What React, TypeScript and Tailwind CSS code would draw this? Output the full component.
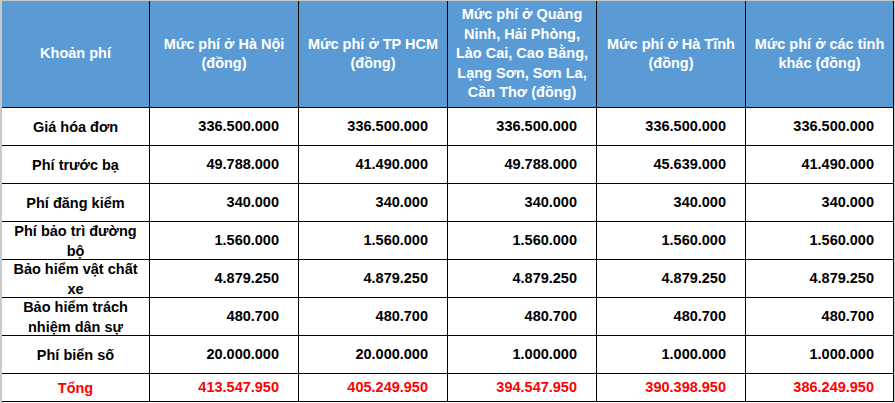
import { Fragment } from 'react';

const headers: string[][] = [
  ['Khoản phí'],
  ['Mức phí ở Hà Nội', '(đồng)'],
  ['Mức phí ở TP HCM', '(đồng)'],
  ['Mức phí ở Quảng', 'Ninh, Hải Phòng,', 'Lào Cai, Cao Bằng,', 'Lạng Sơn, Sơn La,', 'Cần Thơ (đồng)'],
  ['Mức phí ở Hà Tĩnh', '(đồng)'],
  ['Mức phí ở các tỉnh', 'khác (đồng)'],
];

interface Row {
  label: string[];
  values: string[];
  total?: boolean;
}

const rows: Row[] = [
  { label: ['Giá hóa đơn'], values: ['336.500.000', '336.500.000', '336.500.000', '336.500.000', '336.500.000'] },
  { label: ['Phí trước bạ'], values: ['49.788.000', '41.490.000', '49.788.000', '45.639.000', '41.490.000'] },
  { label: ['Phí đăng kiểm'], values: ['340.000', '340.000', '340.000', '340.000', '340.000'] },
  { label: ['Phí bảo trì đường', 'bộ'], values: ['1.560.000', '1.560.000', '1.560.000', '1.560.000', '1.560.000'] },
  { label: ['Bảo hiểm vật chất', 'xe'], values: ['4.879.250', '4.879.250', '4.879.250', '4.879.250', '4.879.250'] },
  { label: ['Bảo hiểm trách', 'nhiệm dân sự'], values: ['480.700', '480.700', '480.700', '480.700', '480.700'] },
  { label: ['Phí biển số'], values: ['20.000.000', '20.000.000', '1.000.000', '1.000.000', '1.000.000'] },
  { label: ['Tổng'], values: ['413.547.950', '405.249.950', '394.547.950', '390.398.950', '386.249.950'], total: true },
];

function Lines({ lines }: { lines: string[] }) {
  return (
    <>
      {lines.map((l, i) => (
        <span key={i} className="block whitespace-nowrap">
          {l}
        </span>
      ))}
    </>
  );
}

export default function App() {
  return (
    <div
      className="w-[895px] h-[403px] bg-white border-t border-l-2 border-r border-[#c8c8c8] overflow-hidden"
      style={{ fontFamily: '"Liberation Sans", Arial, sans-serif' }}
    >
      {/* fee table: black grid lines come from the gap over a black background */}
      <div className="grid grid-cols-[147px_148px_148px_148px_148px_147px] grid-rows-[106px_repeat(7,37px)_27px] gap-px bg-black pr-px pb-px w-[892px] font-bold text-[14.5px] leading-[19.5px]">
        {headers.map((h, i) => (
          <div key={i} className="bg-[#5b9bd5] text-white flex flex-col items-center justify-center text-center">
            <Lines lines={h} />
          </div>
        ))}

        {rows.map((r, ri) => (
          <Fragment key={ri}>
            <div
              className={`bg-white flex flex-col items-center justify-center text-center leading-[20px] ${r.total ? 'text-[#ff0000]' : 'text-black'}`}
            >
              <Lines lines={r.label} />
            </div>
            {r.values.map((v, vi) => (
              <div
                key={vi}
                className={`bg-white flex items-center justify-end pr-[19px] ${r.total ? 'text-[#ff0000]' : 'text-black'}`}
              >
                {v}
              </div>
            ))}
          </Fragment>
        ))}
      </div>
    </div>
  );
}
